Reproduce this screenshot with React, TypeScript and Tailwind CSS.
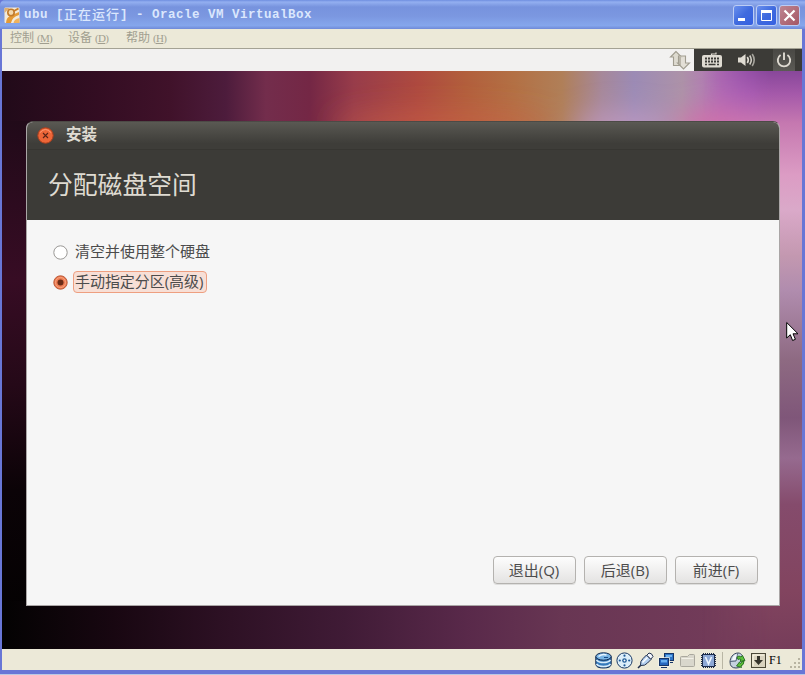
import React from "react";

const Wallpaper = () => (
  <svg className="absolute inset-0" width="800" height="578" viewBox="0 0 800 578" preserveAspectRatio="none">
    <defs>
      <linearGradient id="top" gradientUnits="userSpaceOnUse" x1="0" y1="20" x2="800" y2="20">
        <stop offset="0" stopColor="#210a19" />
        <stop offset=".12" stopColor="#330d22" />
        <stop offset=".21" stopColor="#40122a" />
        <stop offset=".28" stopColor="#4d1c3c" />
        <stop offset=".33" stopColor="#732d4c" />
        <stop offset=".385" stopColor="#742745" />
        <stop offset=".44" stopColor="#983c4a" />
        <stop offset=".52" stopColor="#ae4a3f" />
        <stop offset=".58" stopColor="#b25f3c" />
        <stop offset=".64" stopColor="#b37044" />
        <stop offset=".7" stopColor="#b07f58" />
        <stop offset=".75" stopColor="#a6889a" />
        <stop offset=".79" stopColor="#9c8bb5" />
        <stop offset=".85" stopColor="#ad92a8" />
        <stop offset=".9" stopColor="#b470b8" />
        <stop offset=".94" stopColor="#af63c4" />
        <stop offset="1" stopColor="#8a4a98" />
      </linearGradient>
      <linearGradient id="right" x1="0" y1="0" x2="0" y2="1">
        <stop offset="0" stopColor="#88479a" />
        <stop offset=".04" stopColor="#a559aa" />
        <stop offset=".09" stopColor="#c578b0" />
        <stop offset=".18" stopColor="#dc9cc4" />
        <stop offset=".24" stopColor="#daa9c9" />
        <stop offset=".32" stopColor="#c398b0" />
        <stop offset=".38" stopColor="#b08cae" />
        <stop offset=".5" stopColor="#8e6a82" />
        <stop offset=".6" stopColor="#7f5679" />
        <stop offset=".67" stopColor="#966a8f" />
        <stop offset=".75" stopColor="#854b6c" />
        <stop offset=".9" stopColor="#82445f" />
        <stop offset="1" stopColor="#763d5a" />
      </linearGradient>
      <linearGradient id="fade" x1="0" y1="0" x2="1" y2="0">
        <stop offset="0" stopColor="#fff" stopOpacity="0" />
        <stop offset=".7" stopColor="#fff" />
      </linearGradient>
      <mask id="fadeMask" maskUnits="userSpaceOnUse" x="700" y="0" width="100" height="578">
        <rect x="700" width="100" height="578" fill="url(#fade)" />
      </mask>
      <linearGradient id="left" x1="0" y1="0" x2="0" y2="1">
        <stop offset="0" stopColor="#210a19" />
        <stop offset=".3" stopColor="#370c24" />
        <stop offset=".5" stopColor="#250918" />
        <stop offset=".7" stopColor="#0b0307" />
        <stop offset="1" stopColor="#020101" />
      </linearGradient>
      <linearGradient id="bottom" x1="0" y1="0" x2="1" y2="0">
        <stop offset="0" stopColor="#030202" />
        <stop offset=".14" stopColor="#180711" />
        <stop offset=".27" stopColor="#2c1023" />
        <stop offset=".43" stopColor="#401b36" />
        <stop offset=".58" stopColor="#59294a" />
        <stop offset=".7" stopColor="#683653" />
        <stop offset=".85" stopColor="#703a58" />
        <stop offset="1" stopColor="#783f5c" />
      </linearGradient>
      <filter id="soft" x="-50%" y="-150%" width="200%" height="400%">
        <feGaussianBlur stdDeviation="14" />
      </filter>
    </defs>
    <rect width="800" height="80" fill="url(#top)" />
    <g filter="url(#soft)">
      <ellipse cx="440" cy="54" rx="110" ry="14" fill="#cb6048" opacity=".6" />
      <ellipse cx="620" cy="58" rx="50" ry="16" fill="#c69cc4" opacity=".8" />
      <ellipse cx="730" cy="56" rx="60" ry="18" fill="#d670a8" opacity=".9" />
    </g>
    <rect y="50" width="40" height="528" fill="url(#left)" />
    <rect y="530" width="800" height="48" fill="url(#bottom)" />
    <rect x="700" width="100" height="578" fill="url(#right)" mask="url(#fadeMask)" />
  </svg>
);

const LogoIcon = () => (
  <svg width="16" height="17" viewBox="0 0 16 17">
    <rect x=".5" y=".5" width="15" height="15.500" rx="1" fill="#f3ead9" />
    <path d="M.5 1h5L.5 6Z" fill="#e0b070" />
    <path d="M2 16q0-6 6-8l7-3v3q-7 2-8 8Z" fill="#e49a35" />
    <circle cx="7" cy="5.500" r="3.200" fill="#f3d9ac" stroke="#c07a2c" strokeWidth="1.600" />
    <path d="M9.500 16q.5-4 6-5v5Z" fill="#efb25c" />
    <path d="M10 4l4.500-2.500" stroke="#c77d29" strokeWidth="2" />
  </svg>
);

const WinButton = ({ kind }: { kind: "min" | "max" | "close" }) => (
  <div
    className={
      "flex h-[21px] w-[21px] items-center justify-center rounded-[3px] border border-[#bccdf5] " +
      (kind === "close"
        ? "bg-linear-to-br from-[#bd8592] to-[#a55765]"
        : "bg-linear-to-br from-[#6a90ee] via-[#3f6ade] to-[#3560e2]")
    }
  >
    <svg width="19" height="19" viewBox="0 0 19 19" fill="none" stroke="#fff">
      {kind === "min" && <path d="M4 13.500h7" strokeWidth="3" />}
      {kind === "max" && (
        <>
          <path d="M4 5.500h11" strokeWidth="3" />
          <path d="M4.500 5v9.500h10V5" />
        </>
      )}
      {kind === "close" && <path d="M4.500 4.500l10 10M14.500 4.500l-10 10" strokeWidth="2.200" />}
    </svg>
  </div>
);

const MenuItem = ({ label, letter }: { label: string; letter: string }) => (
  <div className="flex w-[58px] items-center leading-none whitespace-nowrap">
    <span className="text-[12px]">{label}</span>
    <span className="ml-[3px] font-['Liberation_Serif',serif] text-[11px] tracking-[-0.7px]">
      (<span className="underline underline-offset-1">{letter}</span>)
    </span>
  </div>
);

const Arrows = () => (
  <svg width="22" height="20" viewBox="0 0 22 20" fill="#dedbd0" stroke="#a19d90" strokeWidth="1.100">
    <path d="M7 1.500L1.500 7H4.500V15.500H11V7H12.500Z" />
    <path d="M9.500 6H16.500V13H20.500L14.500 19L8.500 13H9.500Z" fillOpacity=".8" />
    <path d="M11 7v8" />
  </svg>
);

const Keyboard = () => (
  <svg width="20" height="18" viewBox="0 0 20 18">
    <path d="M9.500 4.500V3H14V1.500" fill="none" stroke="#dfdbd2" strokeWidth="1.200" />
    <rect x="0" y="4" width="20" height="12.500" rx="2" fill="#dfdbd2" />
    <path d="M3 7.500h14M3 10.500h14" stroke="#3c3b37" strokeWidth="1.800" strokeDasharray="2 1" />
    <path d="M3 13.500h2M6.500 13.500h7M15 13.500h2" stroke="#3c3b37" strokeWidth="1.500" />
  </svg>
);

const Speaker = () => (
  <svg width="18" height="16" viewBox="0 0 18 16" fill="none" stroke="#dfdbd2" strokeWidth="1.600">
    <path d="M0 5.500h3L7.500 2v12L3 10.500H0Z" fill="#dfdbd2" stroke="none" />
    <path d="M9.300 5q2 3 0 6" />
    <path d="M11.700 3.500q3.200 4.500 0 9" opacity=".9" />
    <path d="M14.200 2q4 6 0 12" opacity=".65" />
  </svg>
);

const Power = () => (
  <svg width="16" height="16" viewBox="0 0 16 16" fill="none" stroke="#dfdbd2" strokeWidth="1.900">
    <path d="M4.600 3A6.200 6.200 0 1 0 11.400 3M8 .5v7.500" />
  </svg>
);

const DiskIcon = () => (
  <svg width="17" height="17" viewBox="0 0 17 17" stroke="#12294e">
    <path d="M.8 4.500v7.500q0 4 7.700 4t7.700-4V4.500" fill="#3479bb" />
    <path d="M1.500 8q2 2.500 7 2.500t7-2.500M1.500 12q2 2.500 7 2.500t7-2.500" fill="none" stroke="#d9ecfa" strokeWidth="1.600" />
    <ellipse cx="8.500" cy="4.500" rx="7.700" ry="3.700" fill="#78b4e4" />
    <path d="M3.500 4.500q4-3 8-1.500" fill="none" stroke="#e9f5ff" strokeWidth="1.500" />
    <path d="M9 5.500h4" stroke="#174b86" />
  </svg>
);
const DiscIcon = () => (
  <svg width="17" height="17" viewBox="0 0 17 17">
    <circle cx="8.500" cy="8.500" r="7.600" fill="#dceefa" stroke="#183864" />
    <g fill="#1e5a98">
      <circle cx="8.500" cy="8.500" r="2.300" />
      <circle cx="8.500" cy="3.700" r="1.100" />
      <circle cx="3.800" cy="8.500" r="1.100" />
      <circle cx="13.200" cy="8.500" r="1.100" />
      <circle cx="8.500" cy="13.300" r="1.100" />
    </g>
    <circle cx="8.500" cy="8.500" r="1" fill="#fff" />
  </svg>
);
const PlugIcon = () => (
  <svg width="17" height="17" viewBox="0 0 17 17" stroke="#22304e">
    <path d="M1 16l3.500-3.500" strokeWidth="1.600" />
    <path d="M3.500 13.500Q3 9 6 6.500L9.500 3l4.500 4.500-3.500 3.500Q8 14 3.500 13.500Z" fill="#b4d0f0" />
    <path d="M9.800 3.200L12 1q3 0 4 3.500L13.800 7.200Z" fill="#f4f8ff" />
    <path d="M5.500 10.500l5-5" stroke="#fff" strokeWidth="1.500" />
  </svg>
);
const NetIcon = () => (
  <svg width="17" height="17" viewBox="0 0 17 17" stroke="#173567">
    <rect x="6.500" y="1.500" width="9" height="7" fill="#2d74c6" />
    <path d="M8 3h6v2H8Z" fill="#70b3f0" stroke="none" />
    <path d="M12 10.500h3" />
    <rect x="1.500" y="6.500" width="9" height="7" fill="#2767be" stroke="#f4f5ee" strokeWidth="2.500" />
    <rect x="1.500" y="6.500" width="9" height="7" fill="#2767be" />
    <path d="M3 8h6v2.500H3Z" fill="#69aff0" stroke="none" />
    <path d="M3 15.500h6" />
  </svg>
);
const FolderIcon = () => (
  <svg width="17" height="17" viewBox="0 0 17 17">
    <path d="M1.500 5.500q0-1 1-1h6l2-2h4q1 0 1 1v10q0 1-1 1h-12q-1 0-1-1Z" fill="#d9d7cc" stroke="#aaa89e" />
    <path d="M2.500 6.500h12" stroke="#f2f0e7" />
  </svg>
);
const ChipIcon = () => (
  <svg width="17" height="17" viewBox="0 0 17 17">
    <path
      d="M3.500 1v2M5.500 1v2M7.500 1v2M9.500 1v2M11.500 1v2M13.500 1v2M3.500 14v2M5.500 14v2M7.500 14v2M9.500 14v2M11.500 14v2M13.500 14v2M1 3.500h2M1 5.500h2M1 7.500h2M1 9.500h2M1 11.500h2M1 13.500h2M14 3.500h2M14 5.500h2M14 7.500h2M14 9.500h2M14 11.500h2M14 13.500h2"
      stroke="#1d2c4a"
    />
    <rect x="2.500" y="2.500" width="12" height="12" fill="#8ea9d6" stroke="#1d2c4a" />
    <path d="M5.500 5l3 7 3-7" fill="none" stroke="#eef6ff" strokeWidth="1.600" />
  </svg>
);
const MouseIcon = () => (
  <svg width="17" height="17" viewBox="0 0 17 17">
    <path d="M9 1C4 1 1 6 1 10q0 6 6 6t7-6C14.500 5 13 1 9 1Z" fill="#c5d2df" stroke="#39475d" />
    <path d="M8.500 1.500L7 9l-6 .5" fill="none" stroke="#53637a" />
    <path d="M3 8q1-5 5-6L6.500 8Z" fill="#f3f8fc" />
    <path d="M8 5q2-2 4 0l1.500-1.500 2.500 5-5 1 1-2q-2-1-3 0Z" fill="#5cc03a" stroke="#246b20" strokeWidth=".9" />
    <path d="M15 9q0 4-3 5l.500 1.500-5-1.500 3-4 .8 1.500q1.500-.5 1.500-2Z" fill="#5cc03a" stroke="#246b20" strokeWidth=".9" />
  </svg>
);
const HostKeyIcon = () => (
  <svg width="17" height="17" viewBox="0 0 17 17">
    <rect x="1.500" y="1.500" width="14" height="14" fill="#d8d3bf" stroke="#494737" />
    <path d="M3 14V3h11" fill="none" stroke="#fffbe9" />
    <path d="M7 4h3v4h3l-4.500 5L4 8h3Z" fill="#35342c" />
  </svg>
);

const Radio = ({ on }: { on?: boolean }) => (
  <svg width="15" height="15" viewBox="0 0 15 15">
    <circle cx="7.500" cy="7.500" r="6.700" fill={on ? "#ee7b51" : "#fff"} stroke={on ? "#ba5a39" : "#999794"} />
    {on && <circle cx="7.500" cy="7.500" r="5" fill="none" stroke="#f6a37f" />}
    {on && <circle cx="7.500" cy="7.500" r="3" fill="#6b2c17" />}
  </svg>
);

const DialogButton = ({ children }: { children: React.ReactNode }) => (
  <button className="h-[28px] w-[83px] rounded-[4px] border border-[#b4b2af] bg-linear-to-b from-[#fdfdfd] to-[#e4e3e2] pr-px text-[15px] leading-none text-[#4c4c4c] shadow-[0_1px_0_#dededd]">
    {children}
  </button>
);

export default function App() {
  return (
    <div className="flex h-[675px] w-[805px] flex-col overflow-hidden bg-[#b9c9e4] font-['Open_Sans','Noto_Sans_CJK_SC',sans-serif]">
      <div className="flex h-[674px] flex-col bg-[#6876d6]">
        <header className="flex h-[29px] shrink-0 items-center rounded-tl-[5px] bg-[linear-gradient(#6f8ee0_0,#93aff0_7%,#7793de_24%,#7b97e0_55%,#85a6ec_88%,#6f8ad8_100%)] pt-[2px] pr-[5px] pl-1">
          <LogoIcon />
          <div className="ml-[4px] flex items-center font-['Liberation_Mono','Noto_Sans_CJK_SC',monospace] text-[12.5px] leading-none font-bold tracking-[0.5px] whitespace-pre text-[#dbe7fd]">
            <span>ubu [</span>
            <span className="text-[13px] font-medium tracking-[1px]">正在运行</span>
            <span>] - Oracle VM VirtualBox</span>
          </div>
          <div className="ml-auto flex gap-[2px]">
            <WinButton kind="min" />
            <WinButton kind="max" />
            <WinButton kind="close" />
          </div>
        </header>
        <div className="mr-[3px] ml-[2px] flex h-[641px] flex-col">
          <nav className="flex h-5 shrink-0 items-center border-b border-[#a4a294] bg-[#ece9d8] pb-px pl-[8px] text-[#a19f90]">
            <MenuItem label="控制" letter="M" />
            <MenuItem label="设备" letter="D" />
            <MenuItem label="帮助" letter="H" />
          </nav>
          <div className="flex h-[22px] shrink-0 bg-[#f2f1f0]">
            <div className="ml-auto flex w-[25px] items-center">
              <Arrows />
            </div>
            <div className="flex w-[108px] items-center bg-[#3c3b37] pl-2">
              <Keyboard />
              <div className="ml-[16px] flex">
                <Speaker />
              </div>
              <div className="ml-[17px] flex h-full w-[22px] items-center justify-center bg-linear-to-b from-[#494844] to-[#5b5a55]">
                <Power />
              </div>
            </div>
          </div>
          <main className="relative h-[578px] shrink-0 overflow-hidden pt-[50px] pl-[24px]">
            <Wallpaper />
            <section className="relative flex h-[485px] w-[754px] flex-col overflow-hidden rounded-t-[7px] border border-[#aaa6a6] border-t-[#4c4a46] bg-[#f6f6f6]">
              <div className="flex h-[28px] shrink-0 items-center border-b border-[#373632] bg-linear-to-b from-[#5a5953] to-[#3e3d39] to-80% pb-px pl-[10px]">
                <svg width="17" height="17" viewBox="0 0 17 17">
                  <circle cx="8.500" cy="8.500" r="7.700" fill="#ed6638" stroke="#ad3f1d" />
                  <path d="M3 5.500q5.500-6 11 0" stroke="#ff9b75" fill="none" />
                  <path d="M6 6l5 5M11 6l-5 5" stroke="#592417" strokeWidth="1.100" />
                </svg>
                <h2 className="ml-[12px] pb-px text-[15.500px] leading-none font-bold text-[#dfdbd2]">安装</h2>
              </div>
              <div className="flex h-[70px] shrink-0 items-center bg-[#3c3b37] pb-[2px] pl-[21px]">
                <h1 className="text-[24.8px] leading-none text-[#dfdbd2]">分配磁盘空间</h1>
              </div>
              <div className="flex flex-1 flex-col pt-[21px] pl-[26px] text-[15px] text-[#4c4c4c]">
                <div className="flex h-[22px] items-center">
                  <Radio />
                  <span className="ml-[7px] pb-[2px] leading-none">清空并使用整个硬盘</span>
                </div>
                <div className="mt-[8px] flex h-[22px] items-center">
                  <Radio on />
                  <span className="ml-[5px] flex h-[22px] w-[134px] items-center rounded-[4px] border border-[#ee9f80] bg-[#f7dfd6] pb-[2px] pl-px leading-none tracking-[-0.05px] whitespace-nowrap">
                    手动指定分区(高级)
                  </span>
                </div>
                <div className="mt-auto mr-[21px] mb-[21px] flex justify-end gap-2">
                  <DialogButton>退出(Q)</DialogButton>
                  <DialogButton>后退(B)</DialogButton>
                  <DialogButton>前进(F)</DialogButton>
                </div>
              </div>
            </section>
            <svg className="absolute top-[250px] left-[784px]" width="13" height="21" viewBox="0 0 13 21">
              <path d="M.7 1.500V17L4.300 13.700L6.600 19.500L9.400 18.300L7 12.800H12Z" fill="#fff" stroke="#000" />
            </svg>
          </main>
          <footer className="flex h-[21px] shrink-0 items-center bg-[#ece9d8] pt-px pl-[593px]">
            <div className="flex gap-[4px]">
              <DiskIcon />
              <DiscIcon />
              <PlugIcon />
              <NetIcon />
              <FolderIcon />
              <ChipIcon />
            </div>
            <div className="mr-[6px] ml-[5px] h-[17px] w-px bg-[#b9b6a4]" />
            <div className="flex gap-[4px]">
              <MouseIcon />
              <HostKeyIcon />
            </div>
            <span className="ml-[2px] font-['Liberation_Serif',serif] text-[12px] leading-none font-medium text-black">F1</span>
            <svg className="mt-[6px] ml-auto" width="13" height="13" viewBox="0 0 13 13" fill="#b8b4a2">
              <path d="M9 1h2v2H9zM5 5h2v2H5zM9 5h2v2H9zM1 9h2v2H1zM5 9h2v2H5zM9 9h2v2H9z" />
            </svg>
          </footer>
        </div>
      </div>
    </div>
  );
}
